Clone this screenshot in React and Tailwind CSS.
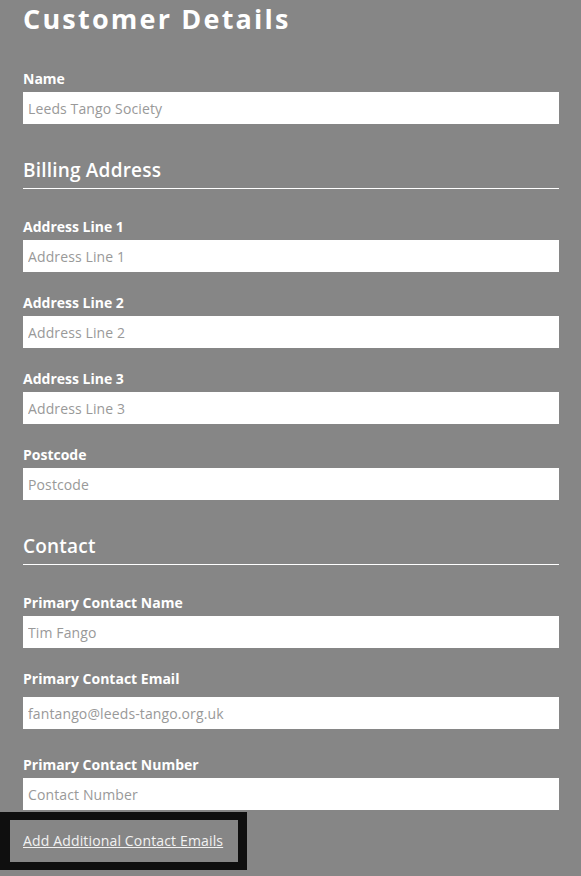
const font = { fontFamily: '"Open Sans", "Noto Sans", sans-serif' };

function Field({ label, value, placeholder }) {
  return (
    <div className="mb-[21px]">
      <label className="mb-[3px] block text-[14px] font-bold leading-[20px] text-white">{label}</label>
      <input
        type="text"
        defaultValue={value}
        placeholder={placeholder}
        className="block h-8 w-full bg-white px-[5px] text-[14px] tracking-[0.12px] text-[#999] outline-none placeholder:text-[#999]"
      />
    </div>
  );
}

function SectionHeading({ children }) {
  return (
    <h2 className="mb-[28px] border-b border-white pt-[1px] pb-[4px] text-[19px] font-semibold leading-[28px] tracking-[0.2px] text-white">
      {children}
    </h2>
  );
}

export default function App() {
  return (
    <div className="min-h-[876px] bg-[#868686] pl-[23px] pr-[22px]" style={font}>
      <h1 className="mb-[32px] text-[27px] font-bold leading-[37px] tracking-[2.2px] text-white">Customer Details</h1>

      <div className="mb-[31px]">
        <label className="mb-[3px] block text-[14px] font-bold leading-[20px] text-white">Name</label>
        <input
          type="text"
          defaultValue="Leeds Tango Society"
          className="block h-8 w-full bg-white px-[5px] text-[14px] tracking-[0.12px] text-[#999] outline-none"
        />
      </div>

      <SectionHeading>Billing Address</SectionHeading>
      <Field label="Address Line 1" placeholder="Address Line 1" />
      <Field label="Address Line 2" placeholder="Address Line 2" />
      <Field label="Address Line 3" placeholder="Address Line 3" />
      <div className="mb-[31px]">
        <label className="mb-[3px] block text-[14px] font-bold leading-[20px] text-white">Postcode</label>
        <input
          type="text"
          placeholder="Postcode"
          className="block h-8 w-full bg-white px-[5px] text-[14px] tracking-[0.12px] text-[#999] outline-none placeholder:text-[#999]"
        />
      </div>

      <SectionHeading>Contact</SectionHeading>
      <Field label="Primary Contact Name" value="Tim Fango" />
      <div className="mb-[26px]">
        <label className="mb-[8px] block text-[14px] font-bold leading-[20px] text-white">Primary Contact Email</label>
        <input
          type="text"
          defaultValue="fantango@leeds-tango.org.uk"
          className="block h-8 w-full bg-white px-[5px] text-[14px] tracking-[0.12px] text-[#999] outline-none"
        />
      </div>
      <div className="mb-[2px]">
        <label className="mb-[3px] block text-[14px] font-bold leading-[20px] text-white">Primary Contact Number</label>
        <input
          type="text"
          placeholder="Contact Number"
          className="block h-8 w-full bg-white px-[5px] text-[14px] tracking-[0.12px] text-[#999] outline-none placeholder:text-[#999]"
        />
      </div>

      <div className="-ml-[23px] flex">
        <button
          type="button"
          className="border-[8px] border-l-[10px] border-r-[9px] border-[#0f0f0f] bg-[#868686] py-[10px] pl-[13px] pr-[15px] text-[14px] leading-[22px] tracking-[0.15px] text-[#f2f2f2] underline"
        >
          Add Additional Contact Emails
        </button>
      </div>
    </div>
  );
}
